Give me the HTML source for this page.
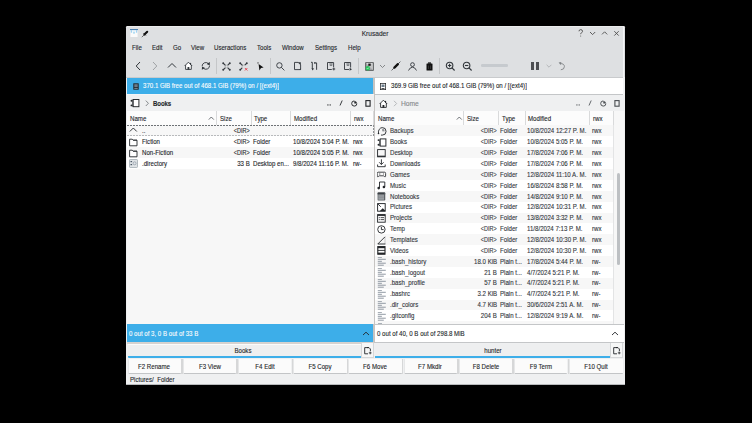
<!DOCTYPE html>
<html><head><meta charset="utf-8"><style>
html,body{margin:0;padding:0;}
body{width:752px;height:423px;background:#000;position:relative;overflow:hidden;font-family:"Liberation Sans", sans-serif;}
</style></head><body>
<div style="position:absolute;left:126px;top:26px;width:498.5px;height:358.6px;background:#eff0f1;border-radius:1.5px 1.5px 0 0;"></div>
<div style="position:absolute;left:126px;top:384px;width:498.5px;height:0.6px;background:#b9bbbd;"></div>
<div style="position:absolute;left:126px;top:26px;width:498.5px;height:51px;background:#dee0e2;border-radius:1.5px 1.5px 0 0;"></div>
<div style="position:absolute;left:127px;top:26px;width:496.5px;height:1px;background:#ebeced;"></div>
<div style="position:absolute;left:126px;top:76.5px;width:498px;height:1.5px;background:#c9cbcd;"></div>
<div style="position:absolute;left:275.1px;width:200px;text-align:center;transform-origin:50% 0;top:29.01px;height:10px;line-height:10px;font-size:6.6px;color:#2a2e32;font-weight:normal;white-space:nowrap;-webkit-text-stroke:0.12px #2a2e32;">Krusader</div>
<svg style="position:absolute;left:129.5px;top:28.8px;" width="8" height="8.5" viewBox="0 0 8 8.5"><rect x="0" y="0" width="8" height="8.5" fill="#fbfbfb" stroke="#c9cbcd" stroke-width="0.5"/><rect x="0" y="0" width="8" height="1.1" fill="#4a7fb0"/><rect x="0.8" y="1.1" width="1.3" height="2.6" fill="#9fd2f2"/><rect x="5.9" y="1.1" width="1.3" height="2.6" fill="#9fd2f2"/><rect x="3.4" y="1.1" width="1.2" height="2.2" fill="#cfe9f8"/><rect x="3.5" y="3.3" width="1" height="1.2" fill="#3daee9"/></svg>
<svg style="position:absolute;left:140.5px;top:29.5px;" width="8" height="8" viewBox="0 0 8 8"><path d="M3.4 4.6 L6.2 1.8" stroke="#111" stroke-width="2.1" stroke-linecap="round"/><path d="M2.6 3.2 L4.8 5.4" stroke="#111" stroke-width="0.9"/><path d="M3.2 4.8 L0.8 7.2" stroke="#333" stroke-width="0.7"/></svg>
<svg style="position:absolute;left:577px;top:29px;" width="48" height="9" viewBox="0 0 48 9">
<path d="M2 2.3 Q2 0.6 3.7 0.6 Q5.5 0.6 5.5 2.3 Q5.5 3.4 4.3 3.9 Q3.7 4.2 3.7 5.2" fill="none" stroke="#4d4d4d" stroke-width="0.9"/><circle cx="3.7" cy="7" r="0.5" fill="#4d4d4d"/>
<path d="M13 3 L15.6 5.6 L18.2 3" fill="none" stroke="#4d4d4d" stroke-width="0.9"/>
<path d="M25 5.4 L27.6 2.8 L30.2 5.4" fill="none" stroke="#4d4d4d" stroke-width="0.9"/>
<path d="M37.3 2.2 L41.7 6.6 M41.7 2.2 L37.3 6.6" fill="none" stroke="#4d4d4d" stroke-width="0.9"/>
</svg>
<div style="position:absolute;left:132px;transform-origin:0 0;transform:scaleX(0.85);top:42.51px;height:10px;line-height:10px;font-size:7.2px;color:#232629;font-weight:normal;white-space:nowrap;-webkit-text-stroke:0.12px #232629;">File</div>
<div style="position:absolute;left:152px;transform-origin:0 0;transform:scaleX(0.85);top:42.51px;height:10px;line-height:10px;font-size:7.2px;color:#232629;font-weight:normal;white-space:nowrap;-webkit-text-stroke:0.12px #232629;">Edit</div>
<div style="position:absolute;left:172.9px;transform-origin:0 0;transform:scaleX(0.85);top:42.51px;height:10px;line-height:10px;font-size:7.2px;color:#232629;font-weight:normal;white-space:nowrap;-webkit-text-stroke:0.12px #232629;">Go</div>
<div style="position:absolute;left:190.75px;transform-origin:0 0;transform:scaleX(0.85);top:42.51px;height:10px;line-height:10px;font-size:7.2px;color:#232629;font-weight:normal;white-space:nowrap;-webkit-text-stroke:0.12px #232629;">View</div>
<div style="position:absolute;left:214.4px;transform-origin:0 0;transform:scaleX(0.85);top:42.51px;height:10px;line-height:10px;font-size:7.2px;color:#232629;font-weight:normal;white-space:nowrap;-webkit-text-stroke:0.12px #232629;">Useractions</div>
<div style="position:absolute;left:257px;transform-origin:0 0;transform:scaleX(0.85);top:42.51px;height:10px;line-height:10px;font-size:7.2px;color:#232629;font-weight:normal;white-space:nowrap;-webkit-text-stroke:0.12px #232629;">Tools</div>
<div style="position:absolute;left:281.75px;transform-origin:0 0;transform:scaleX(0.85);top:42.51px;height:10px;line-height:10px;font-size:7.2px;color:#232629;font-weight:normal;white-space:nowrap;-webkit-text-stroke:0.12px #232629;">Window</div>
<div style="position:absolute;left:315px;transform-origin:0 0;transform:scaleX(0.85);top:42.51px;height:10px;line-height:10px;font-size:7.2px;color:#232629;font-weight:normal;white-space:nowrap;-webkit-text-stroke:0.12px #232629;">Settings</div>
<div style="position:absolute;left:348px;transform-origin:0 0;transform:scaleX(0.85);top:42.51px;height:10px;line-height:10px;font-size:7.2px;color:#232629;font-weight:normal;white-space:nowrap;-webkit-text-stroke:0.12px #232629;">Help</div>
<svg style="position:absolute;left:135px;top:61px;" width="6" height="10" viewBox="0 0 6 10"><path d="M5 1 L1.2 5 L5 9" fill="none" stroke="#31363b" stroke-width="1"/></svg>
<svg style="position:absolute;left:152px;top:61px;" width="6" height="10" viewBox="0 0 6 10"><path d="M1 1 L4.8 5 L1 9" fill="none" stroke="#9fa2a5" stroke-width="1"/></svg>
<svg style="position:absolute;left:167px;top:62px;" width="10" height="7" viewBox="0 0 10 7"><path d="M1 5.5 L5 1.5 L9 5.5" fill="none" stroke="#31363b" stroke-width="1"/></svg>
<svg style="position:absolute;left:184px;top:61.2px;" width="9" height="9" viewBox="0 0 9 9"><path d="M1.6 4.3 L4.4 1.6 L7.3 4.3 V8.4 H1.6 Z" fill="#fff"/><path d="M0.6 5 L4.4 1.2 L8.2 5" fill="none" stroke="#31363b" stroke-width="0.9"/><path d="M1.6 4.2 V8.4 H7.3 V4.2" fill="none" stroke="#31363b" stroke-width="0.9"/><rect x="3.5" y="5.9" width="1.9" height="2.8" rx="0.5" fill="#31363b"/><rect x="6" y="1.9" width="1.1" height="1.8" fill="#31363b"/></svg>
<svg style="position:absolute;left:201px;top:61px;" width="10" height="9" viewBox="0 0 10 9"><path d="M1.1 5.2 A3.7 3.7 0 0 1 7.4 2.6" fill="none" stroke="#31363b" stroke-width="0.9"/><path d="M5.6 2.9 L8.9 1.1 L8.7 4.4 Z" fill="#31363b"/><path d="M8.6 4.6 A3.7 3.7 0 0 1 2.3 7.2" fill="none" stroke="#31363b" stroke-width="0.9"/><path d="M4.1 6.9 L0.8 8.7 L1 5.4 Z" fill="#31363b"/></svg>
<div style="position:absolute;left:215.6px;top:57.75px;width:1px;height:16px;background:#c5c7c9;"></div>
<div style="position:absolute;left:269.8px;top:57.75px;width:1px;height:16px;background:#c5c7c9;"></div>
<div style="position:absolute;left:358px;top:57.75px;width:1px;height:16px;background:#c5c7c9;"></div>
<div style="position:absolute;left:438.9px;top:57.75px;width:1px;height:16px;background:#c5c7c9;"></div>
<svg style="position:absolute;left:221.5px;top:61.5px;" width="9" height="9" viewBox="0 0 9 9"><path d="M1.2 1.2 L3.2 3.2 M7.8 1.2 L5.8 3.2 M1.2 7.8 L3.2 5.8 M7.8 7.8 L5.8 5.8" stroke="#31363b" stroke-width="1.1"/><circle cx="1.2" cy="1.2" r="0.95" fill="#31363b"/><circle cx="7.8" cy="1.2" r="0.95" fill="#31363b"/><circle cx="1.2" cy="7.8" r="0.95" fill="#31363b"/><circle cx="7.8" cy="7.8" r="0.95" fill="#31363b"/><rect x="3.2" y="3.2" width="2.6" height="2.6" fill="none" stroke="#31363b" stroke-width="0.6" stroke-dasharray="0.8 0.6" opacity="0.8"/></svg>
<svg style="position:absolute;left:238.5px;top:61.5px;" width="9" height="9" viewBox="0 0 9 9"><path d="M1.2 1.2 L3.2 3.2 M7.8 1.2 L5.8 3.2 M1.2 7.8 L3.2 5.8" stroke="#31363b" stroke-width="1.1"/><circle cx="1.2" cy="1.2" r="0.95" fill="#31363b"/><circle cx="7.8" cy="1.2" r="0.95" fill="#31363b"/><circle cx="1.2" cy="7.8" r="0.95" fill="#31363b"/><path d="M3.2 3.2 H5.8 M3.2 3.2 V5.8" fill="none" stroke="#31363b" stroke-width="0.6" stroke-dasharray="0.8 0.6" opacity="0.8"/><path d="M5.9 6 L8.4 8.5 M8.4 6 L5.9 8.5" stroke="#e8303f" stroke-width="0.8"/></svg>
<svg style="position:absolute;left:256.5px;top:61.5px;" width="7" height="9" viewBox="0 0 7 9"><circle cx="1" cy="0.9" r="0.55" fill="#111"/><path d="M1.6 2 L6.6 5.6 L4 5.9 L2.4 8.4 Z" fill="#111"/></svg>
<svg style="position:absolute;left:276px;top:61.5px;" width="9" height="9" viewBox="0 0 9 9"><circle cx="3.4" cy="3.4" r="2.7" fill="none" stroke="#31363b" stroke-width="0.9"/><path d="M5.3 5.3 L8.4 8.4" stroke="#31363b" stroke-width="0.9"/></svg>
<svg style="position:absolute;left:293px;top:61px;" width="9" height="10" viewBox="0 0 9 10"><path d="M1.5 1.4 H5.2 L7.6 3.8 V8.6 H1.5 Z" fill="none" stroke="#31363b" stroke-width="0.9"/><path d="M5 1.2 L7.8 4 V1.2 Z" fill="#31363b"/><path d="M6.2 8.8 L7.8 7.2 V8.8 Z" fill="#31363b"/></svg>
<svg style="position:absolute;left:310px;top:61px;" width="8" height="10" viewBox="0 0 8 10"><path d="M1 1.3 H2.3 V8" fill="none" stroke="#31363b" stroke-width="0.95"/><path d="M1.6 7.2 L4.2 7.6 L2.4 9.4 Z" fill="#31363b"/><path d="M4.2 1.9 H6.6 V8.8" fill="none" stroke="#31363b" stroke-width="0.95"/><rect x="4.2" y="1.3" width="1.2" height="1.3" fill="#31363b"/></svg>
<svg style="position:absolute;left:326px;top:61px;" width="10" height="10" viewBox="0 0 10 10"><path d="M7.6 6.2 V1.5 H1.5 V8.5 H5.8" fill="none" stroke="#31363b" stroke-width="0.9"/><path d="M4.1 1.5 V4.6 L5 3.9 L5.9 4.6 V1.5" fill="none" stroke="#31363b" stroke-width="0.6"/><path d="M6.4 8 H9.2 M7.8 6.6 V9.4" stroke="#31363b" stroke-width="0.9"/></svg>
<svg style="position:absolute;left:343px;top:61px;" width="10" height="10" viewBox="0 0 10 10"><path d="M7.6 6.6 V1.5 H1.5 V8.5 H6" fill="none" stroke="#31363b" stroke-width="0.9"/><path d="M4.1 1.5 V4.6 L5 3.9 L5.9 4.6 V1.5" fill="none" stroke="#31363b" stroke-width="0.6"/><path d="M6.6 6.8 L9 8.3 L6.6 9.8 Z" fill="#31363b"/></svg>
<svg style="position:absolute;left:364.5px;top:61.5px;" width="9" height="9" viewBox="0 0 9 9"><rect x="0.3" y="0.3" width="8.4" height="8.4" fill="#3a3c3e"/><rect x="1.1" y="1.1" width="6.8" height="6.8" fill="#a9abad"/><path d="M1.1 1.1 L4.5 4.5 L7.9 1.1 Z" fill="#d8d9da"/><path d="M7.9 7.9 L4.5 4.5 L7.9 1.1 Z" fill="#c4c5c6"/><rect x="3.3" y="1.6" width="2.4" height="2.2" fill="#111"/><circle cx="2.8" cy="6.2" r="2.2" fill="#27c75c"/><path d="M1.8 6.2 L2.6 7 L3.9 5.5" fill="none" stroke="#fff" stroke-width="0.5"/></svg>
<svg style="position:absolute;left:379px;top:64px;" width="7" height="5" viewBox="0 0 7 5"><path d="M1 1 L3.5 3.5 L6 1" fill="none" stroke="#6e7174" stroke-width="0.8"/></svg>
<svg style="position:absolute;left:391px;top:61px;" width="10" height="10" viewBox="0 0 10 10"><path d="M3.4 6.6 L6.9 3.1" stroke="#111" stroke-width="2.3" stroke-linecap="round"/><path d="M0.6 9.4 L3 7 M7.3 2.7 L9.4 0.6" stroke="#31363b" stroke-width="0.75"/></svg>
<svg style="position:absolute;left:408px;top:61.5px;" width="9" height="9" viewBox="0 0 9 9"><circle cx="4.5" cy="2.6" r="1.9" fill="none" stroke="#31363b" stroke-width="0.9"/><path d="M0.5 8.5 Q2 5.2 4.5 5.2 Q7 5.2 8.5 8.5" fill="none" stroke="#31363b" stroke-width="0.9"/></svg>
<svg style="position:absolute;left:425.5px;top:61.5px;" width="7" height="9" viewBox="0 0 7 9"><rect x="0.5" y="1.5" width="6" height="7" rx="0.5" fill="#111"/><rect x="2" y="0.4" width="3" height="1.3" fill="#111"/><path d="M2.5 3.5 V7 M4.5 3.5 V7" stroke="#555" stroke-width="0.5"/></svg>
<svg style="position:absolute;left:445px;top:61px;" width="11" height="10" viewBox="0 0 11 10"><circle cx="4.6" cy="4.5" r="3.3" fill="none" stroke="#31363b" stroke-width="1.05"/><path d="M7 6.9 L9.6 9.5" stroke="#31363b" stroke-width="1.2"/><path d="M2.9 4.5 H6.3 M4.6 2.8 V6.2" stroke="#31363b" stroke-width="1.1"/></svg>
<svg style="position:absolute;left:462px;top:61px;" width="11" height="10" viewBox="0 0 11 10"><circle cx="4.6" cy="4.5" r="3.3" fill="none" stroke="#31363b" stroke-width="1.05"/><path d="M7 6.9 L9.6 9.5" stroke="#31363b" stroke-width="1.2"/><path d="M2.9 4.5 H6.3" stroke="#31363b" stroke-width="1.1"/></svg>
<div style="position:absolute;left:481px;top:64.2px;width:27px;height:2.6px;background:#c6cace;border-radius:1.3px;"></div>
<div style="position:absolute;left:530.5px;top:62px;width:3.2px;height:8px;background:#4d4f52;"></div>
<div style="position:absolute;left:535.7px;top:62px;width:3.2px;height:8px;background:#4d4f52;"></div>
<svg style="position:absolute;left:545.5px;top:64.2px;" width="6" height="4" viewBox="0 0 6 4"><path d="M0.6 0.8 L3 3.2 L5.4 0.8" fill="none" stroke="#a9abad" stroke-width="0.8"/></svg>
<svg style="position:absolute;left:558px;top:61px;" width="8" height="10" viewBox="0 0 8 10"><path d="M2 2.6 Q6.4 2.4 6.4 5.6 Q6.4 8.6 2.8 8.8" fill="none" stroke="#7f8285" stroke-width="0.9"/><path d="M0.6 1.6 L3.4 0.9 L2.6 4 Z" fill="#7f8285"/></svg>
<div style="position:absolute;left:127px;top:77.7px;width:246px;height:16.2px;background:#3daee9;"></div>
<svg style="position:absolute;left:132.5px;top:82.5px;" width="6" height="7" viewBox="0 0 6 7"><rect x="0.3" y="0.3" width="5.4" height="6.4" fill="#232629"/><rect x="1.3" y="1.2" width="3.4" height="3" fill="#6b7c8a"/><rect x="1.3" y="5" width="3.4" height="0.8" fill="#8899a6"/></svg>
<div style="position:absolute;left:142.9px;transform-origin:0 0;transform:scaleX(0.85);top:81.31px;height:10px;line-height:10px;font-size:7.2px;color:#fcfcfc;font-weight:normal;white-space:nowrap;-webkit-text-stroke:0.12px #fcfcfc;">370.1 GiB free out of 468.1 GiB (79%) on / [(ext4)]</div>
<div style="position:absolute;left:373px;top:78px;width:2.4px;height:264.5px;background:#c6c4c2;"></div>
<div style="position:absolute;left:375.4px;top:78px;width:248.6px;height:16.6px;background:#fff;box-sizing:border-box;border-bottom:1px solid #c4c6c8;"></div>
<div style="position:absolute;left:623.4px;top:26.5px;width:1px;height:68px;background:#f4f5f6;"></div>
<svg style="position:absolute;left:379.5px;top:82.5px;" width="6" height="7" viewBox="0 0 6 7"><rect x="0.3" y="0.3" width="5.4" height="6.4" fill="#fff" stroke="#232629" stroke-width="0.9"/><rect x="1.5" y="1.5" width="3" height="2.5" fill="#6b7c8a"/><rect x="1.5" y="5" width="3" height="0.8" fill="#232629"/></svg>
<div style="position:absolute;left:390.5px;transform-origin:0 0;transform:scaleX(0.85);top:81.31px;height:10px;line-height:10px;font-size:7.2px;color:#232629;font-weight:normal;white-space:nowrap;-webkit-text-stroke:0.12px #232629;">369.9 GiB free out of 468.1 GiB (79%) on / [(ext4)]</div>
<div style="position:absolute;left:127px;top:94px;width:246.5px;height:1px;background:#f4f5f6;"></div>
<div style="position:absolute;left:127px;top:95px;width:246.5px;height:15.7px;background:#eff0f1;"></div>
<div style="position:absolute;left:375px;top:94.5px;width:249px;height:16.2px;background:#eff0f1;"></div>
<svg style="position:absolute;left:129.5px;top:98px;" width="10" height="10" viewBox="0 0 10 10"><rect x="3.2" y="1.5" width="5.7" height="7.2" fill="#fff" stroke="#232629" stroke-width="0.95"/><path d="M2.5 1.5 V8.7" stroke="#232629" stroke-width="0.6"/><circle cx="1.5" cy="2.7" r="0.95" fill="#232629"/><circle cx="1.5" cy="7.4" r="0.95" fill="#232629"/></svg>
<svg style="position:absolute;left:144.5px;top:99.8px;" width="5" height="7" viewBox="0 0 5 7"><path d="M0.8 0.6 L3.4 3.3 L0.8 6" fill="none" stroke="#6a6e72" stroke-width="0.8"/></svg>
<div style="position:absolute;left:152.9px;transform-origin:0 0;transform:scaleX(0.85);top:98.51px;height:10px;line-height:10px;font-size:7.2px;color:#232629;font-weight:bold;white-space:nowrap;-webkit-text-stroke:0.12px #232629;letter-spacing:-0.15px;">Books</div>
<svg style="position:absolute;left:326.5px;top:103.5px;" width="5" height="2" viewBox="0 0 5 2"><rect x="0.3" y="0.4" width="1.2" height="1.1" fill="#232629"/><rect x="2.6" y="0.4" width="1.2" height="1.1" fill="#232629"/></svg>
<svg style="position:absolute;left:338.5px;top:100px;" width="4" height="6" viewBox="0 0 4 6"><path d="M3.2 0.5 L1 5.5" stroke="#232629" stroke-width="0.9"/></svg>
<svg style="position:absolute;left:350.5px;top:100px;" width="7" height="7" viewBox="0 0 7 7"><path d="M3.3 0.9 A2.6 2.6 0 1 0 5.9 3.6" fill="none" stroke="#232629" stroke-width="0.95"/><path d="M3.3 1 L3.3 3.6 L5.9 3.6 A2.6 2.6 0 0 0 3.3 1 Z" fill="#232629"/></svg>
<svg style="position:absolute;left:364.5px;top:100px;" width="6" height="7" viewBox="0 0 6 7"><rect x="0.9" y="0.6" width="4.2" height="5.6" fill="none" stroke="#232629" stroke-width="1.1"/></svg>
<svg style="position:absolute;left:576.3px;top:103.5px;" width="5" height="2" viewBox="0 0 5 2"><rect x="0.3" y="0.4" width="1.2" height="1.1" fill="#55595d"/><rect x="2.6" y="0.4" width="1.2" height="1.1" fill="#55595d"/></svg>
<svg style="position:absolute;left:588.3px;top:100px;" width="4" height="6" viewBox="0 0 4 6"><path d="M3.2 0.5 L1 5.5" stroke="#55595d" stroke-width="0.9"/></svg>
<svg style="position:absolute;left:600.3px;top:100px;" width="7" height="7" viewBox="0 0 7 7"><path d="M3.3 0.9 A2.6 2.6 0 1 0 5.9 3.6" fill="none" stroke="#4a4e52" stroke-width="0.95"/><path d="M3.3 1 L3.3 3.6 L5.9 3.6 A2.6 2.6 0 0 0 3.3 1 Z" fill="#4a4e52"/></svg>
<svg style="position:absolute;left:614.3px;top:100px;" width="6" height="7" viewBox="0 0 6 7"><rect x="0.9" y="0.6" width="4.2" height="5.6" fill="none" stroke="#4a4e52" stroke-width="1.1"/></svg>
<svg style="position:absolute;left:378.5px;top:98.5px;" width="9" height="9" viewBox="0 0 9 9"><path d="M1.6 4.3 L4.4 1.6 L7.3 4.3 V8.4 H1.6 Z" fill="#fff"/><path d="M0.6 5 L4.4 1.2 L8.2 5" fill="none" stroke="#232629" stroke-width="0.9"/><path d="M1.6 4.2 V8.4 H7.3 V4.2" fill="none" stroke="#232629" stroke-width="0.9"/><rect x="3.5" y="5.9" width="1.9" height="2.8" rx="0.5" fill="#232629"/><rect x="6" y="1.9" width="1.1" height="1.8" fill="#232629"/></svg>
<svg style="position:absolute;left:392.5px;top:100px;" width="5" height="7" viewBox="0 0 5 7"><path d="M1 0.8 L3.6 3.5 L1 6.2" fill="none" stroke="#a7aaad" stroke-width="0.8"/></svg>
<div style="position:absolute;left:400.9px;transform-origin:0 0;transform:scaleX(0.93);top:98.51px;height:10px;line-height:10px;font-size:7.2px;color:#85888b;font-weight:normal;white-space:nowrap;-webkit-text-stroke:0.12px #85888b;">Home</div>
<div style="position:absolute;left:127px;top:110.7px;width:246.5px;height:14.3px;background:#fcfcfc;"></div>
<div style="position:absolute;left:216.2px;top:110.7px;width:1px;height:14.3px;background:#d9dadb;"></div>
<div style="position:absolute;left:251px;top:110.7px;width:1px;height:14.3px;background:#d9dadb;"></div>
<div style="position:absolute;left:290.4px;top:110.7px;width:1px;height:14.3px;background:#d9dadb;"></div>
<div style="position:absolute;left:350px;top:110.7px;width:1px;height:14.3px;background:#d9dadb;"></div>
<div style="position:absolute;left:129.75px;transform-origin:0 0;transform:scaleX(0.85);top:113.51px;height:10px;line-height:10px;font-size:7.2px;color:#232629;font-weight:normal;white-space:nowrap;-webkit-text-stroke:0.12px #232629;">Name</div>
<div style="position:absolute;left:219.5px;transform-origin:0 0;transform:scaleX(0.85);top:113.51px;height:10px;line-height:10px;font-size:7.2px;color:#232629;font-weight:normal;white-space:nowrap;-webkit-text-stroke:0.12px #232629;">Size</div>
<div style="position:absolute;left:254.25px;transform-origin:0 0;transform:scaleX(0.85);top:113.51px;height:10px;line-height:10px;font-size:7.2px;color:#232629;font-weight:normal;white-space:nowrap;-webkit-text-stroke:0.12px #232629;">Type</div>
<div style="position:absolute;left:293.75px;transform-origin:0 0;transform:scaleX(0.85);top:113.51px;height:10px;line-height:10px;font-size:7.2px;color:#232629;font-weight:normal;white-space:nowrap;-webkit-text-stroke:0.12px #232629;">Modified</div>
<div style="position:absolute;left:353.7px;transform-origin:0 0;transform:scaleX(0.85);top:113.51px;height:10px;line-height:10px;font-size:7.2px;color:#232629;font-weight:normal;white-space:nowrap;-webkit-text-stroke:0.12px #232629;">rwx</div>
<svg style="position:absolute;left:208.2px;top:115.5px;" width="7" height="5" viewBox="0 0 7 5"><path d="M0.8 3.6 L3.3 1 L5.8 3.6" fill="none" stroke="#4d5257" stroke-width="0.8"/></svg>
<div style="position:absolute;left:372.5px;top:110.7px;width:1px;height:14.3px;background:#d9dadb;"></div>
<div style="position:absolute;left:375px;top:110.7px;width:238.5px;height:14.3px;background:#fcfcfc;"></div>
<div style="position:absolute;left:463.2px;top:110.7px;width:1px;height:14.3px;background:#d9dadb;"></div>
<div style="position:absolute;left:498.2px;top:110.7px;width:1px;height:14.3px;background:#d9dadb;"></div>
<div style="position:absolute;left:524.9px;top:110.7px;width:1px;height:14.3px;background:#d9dadb;"></div>
<div style="position:absolute;left:589.2px;top:110.7px;width:1px;height:14.3px;background:#d9dadb;"></div>
<div style="position:absolute;left:378px;transform-origin:0 0;transform:scaleX(0.85);top:113.51px;height:10px;line-height:10px;font-size:7.2px;color:#232629;font-weight:normal;white-space:nowrap;-webkit-text-stroke:0.12px #232629;">Name</div>
<div style="position:absolute;left:466.75px;transform-origin:0 0;transform:scaleX(0.85);top:113.51px;height:10px;line-height:10px;font-size:7.2px;color:#232629;font-weight:normal;white-space:nowrap;-webkit-text-stroke:0.12px #232629;">Size</div>
<div style="position:absolute;left:501.5px;transform-origin:0 0;transform:scaleX(0.85);top:113.51px;height:10px;line-height:10px;font-size:7.2px;color:#232629;font-weight:normal;white-space:nowrap;-webkit-text-stroke:0.12px #232629;">Type</div>
<div style="position:absolute;left:528px;transform-origin:0 0;transform:scaleX(0.85);top:113.51px;height:10px;line-height:10px;font-size:7.2px;color:#232629;font-weight:normal;white-space:nowrap;-webkit-text-stroke:0.12px #232629;">Modified</div>
<div style="position:absolute;left:592.5px;transform-origin:0 0;transform:scaleX(0.85);top:113.51px;height:10px;line-height:10px;font-size:7.2px;color:#232629;font-weight:normal;white-space:nowrap;-webkit-text-stroke:0.12px #232629;">rwx</div>
<svg style="position:absolute;left:455.5px;top:115.5px;" width="7" height="5" viewBox="0 0 7 5"><path d="M0.8 3.6 L3.3 1 L5.8 3.6" fill="none" stroke="#4d5257" stroke-width="0.8"/></svg>
<div style="position:absolute;left:613px;top:110.7px;width:1px;height:14.3px;background:#d9dadb;"></div>
<div style="position:absolute;left:127px;top:125px;width:246.5px;height:199.3px;background:#f7f7f7;"></div>
<div style="position:absolute;left:375px;top:125px;width:238.5px;height:198.8px;background:#f7f7f7;overflow:hidden;"></div>
<div style="position:absolute;left:613.5px;top:110.7px;width:10.5px;height:213.3px;background:#f7f7f7;"></div>
<div style="position:absolute;left:613px;top:125px;width:1px;height:198.8px;background:#e3e4e5;"></div>
<div style="position:absolute;left:616.8px;top:173px;width:3px;height:92px;background:#bdc0c3;border-radius:1.5px;"></div>
<div style="position:absolute;left:127px;top:125.6px;width:246.5px;height:10.87px;background:#f7f7f7;"></div>
<div style="position:absolute;left:127px;top:125px;width:246.5px;height:1px;background:repeating-linear-gradient(90deg,#6e7276 0 2px,transparent 2px 3px);"></div>
<div style="position:absolute;left:127px;top:135px;width:246.5px;height:1px;background:repeating-linear-gradient(90deg,#b8babc 0 2px,transparent 2px 3px);"></div>
<div style="position:absolute;left:372.7px;top:125px;width:1px;height:11px;background:repeating-linear-gradient(180deg,#8e9194 0 2px,transparent 2px 3px);"></div>
<svg style="position:absolute;left:129px;top:126.8px;" width="10" height="10" viewBox="0 0 10 10"><path d="M0.8 4.5 L4.3 1 L7.8 4.5" fill="none" stroke="#232629" stroke-width="0.9"/></svg>
<div style="position:absolute;left:142px;transform-origin:0 0;transform:scaleX(0.85);top:126.31px;height:10px;line-height:10px;font-size:7.2px;color:#232629;font-weight:normal;white-space:nowrap;-webkit-text-stroke:0.12px #232629;">..</div>
<div style="position:absolute;right:502.1px;transform-origin:100% 0;transform:scaleX(0.77);top:126.31px;height:10px;line-height:10px;font-size:7.2px;color:#232629;font-weight:normal;white-space:nowrap;-webkit-text-stroke:0.12px #232629;">&lt;DIR&gt;</div>
<div style="position:absolute;left:253.3px;transform-origin:0 0;transform:scaleX(0.85);top:126.31px;height:10px;line-height:10px;font-size:7.2px;color:#232629;font-weight:normal;white-space:nowrap;-webkit-text-stroke:0.12px #232629;"></div>
<div style="position:absolute;left:292.8px;transform-origin:0 0;transform:scaleX(0.85);top:126.31px;height:10px;line-height:10px;font-size:7.2px;color:#232629;font-weight:normal;white-space:nowrap;-webkit-text-stroke:0.12px #232629;"></div>
<div style="position:absolute;left:352.9px;transform-origin:0 0;transform:scaleX(0.85);top:126.31px;height:10px;line-height:10px;font-size:7.2px;color:#232629;font-weight:normal;white-space:nowrap;-webkit-text-stroke:0.12px #232629;"></div>
<div style="position:absolute;left:127px;top:136.47px;width:246.5px;height:10.87px;background:#ffffff;"></div>
<svg style="position:absolute;left:129px;top:137.67px;" width="10" height="10" viewBox="0 0 10 10"><path d="M0.6 1.2 H3.2 L4.2 2.2 H8 V7.8 H0.6 Z" fill="#fff" stroke="#232629" stroke-width="0.9"/><path d="M3.6 1.8 H8 V2.6 H4.2" fill="#232629"/></svg>
<div style="position:absolute;left:142px;transform-origin:0 0;transform:scaleX(0.85);top:137.18px;height:10px;line-height:10px;font-size:7.2px;color:#232629;font-weight:normal;white-space:nowrap;-webkit-text-stroke:0.12px #232629;">Fiction</div>
<div style="position:absolute;right:502.1px;transform-origin:100% 0;transform:scaleX(0.77);top:137.18px;height:10px;line-height:10px;font-size:7.2px;color:#232629;font-weight:normal;white-space:nowrap;-webkit-text-stroke:0.12px #232629;">&lt;DIR&gt;</div>
<div style="position:absolute;left:253.3px;transform-origin:0 0;transform:scaleX(0.85);top:137.18px;height:10px;line-height:10px;font-size:7.2px;color:#232629;font-weight:normal;white-space:nowrap;-webkit-text-stroke:0.12px #232629;">Folder</div>
<div style="position:absolute;left:292.8px;transform-origin:0 0;transform:scaleX(0.85);top:137.18px;height:10px;line-height:10px;font-size:7.2px;color:#232629;font-weight:normal;white-space:nowrap;-webkit-text-stroke:0.12px #232629;">10/8/2024 5:04 P. M.</div>
<div style="position:absolute;left:352.9px;transform-origin:0 0;transform:scaleX(0.85);top:137.18px;height:10px;line-height:10px;font-size:7.2px;color:#232629;font-weight:normal;white-space:nowrap;-webkit-text-stroke:0.12px #232629;">rwx</div>
<div style="position:absolute;left:127px;top:147.34px;width:246.5px;height:10.87px;background:#f7f7f7;"></div>
<svg style="position:absolute;left:129px;top:148.54px;" width="10" height="10" viewBox="0 0 10 10"><path d="M0.6 1.2 H3.2 L4.2 2.2 H8 V7.8 H0.6 Z" fill="#fff" stroke="#232629" stroke-width="0.9"/><path d="M3.6 1.8 H8 V2.6 H4.2" fill="#232629"/></svg>
<div style="position:absolute;left:142px;transform-origin:0 0;transform:scaleX(0.85);top:148.05px;height:10px;line-height:10px;font-size:7.2px;color:#232629;font-weight:normal;white-space:nowrap;-webkit-text-stroke:0.12px #232629;">Non-Fiction</div>
<div style="position:absolute;right:502.1px;transform-origin:100% 0;transform:scaleX(0.77);top:148.05px;height:10px;line-height:10px;font-size:7.2px;color:#232629;font-weight:normal;white-space:nowrap;-webkit-text-stroke:0.12px #232629;">&lt;DIR&gt;</div>
<div style="position:absolute;left:253.3px;transform-origin:0 0;transform:scaleX(0.85);top:148.05px;height:10px;line-height:10px;font-size:7.2px;color:#232629;font-weight:normal;white-space:nowrap;-webkit-text-stroke:0.12px #232629;">Folder</div>
<div style="position:absolute;left:292.8px;transform-origin:0 0;transform:scaleX(0.85);top:148.05px;height:10px;line-height:10px;font-size:7.2px;color:#232629;font-weight:normal;white-space:nowrap;-webkit-text-stroke:0.12px #232629;">10/8/2024 5:05 P. M.</div>
<div style="position:absolute;left:352.9px;transform-origin:0 0;transform:scaleX(0.85);top:148.05px;height:10px;line-height:10px;font-size:7.2px;color:#232629;font-weight:normal;white-space:nowrap;-webkit-text-stroke:0.12px #232629;">rwx</div>
<div style="position:absolute;left:127px;top:158.20999999999998px;width:246.5px;height:10.87px;background:#ffffff;"></div>
<svg style="position:absolute;left:129px;top:159.40999999999997px;" width="10" height="10" viewBox="0 0 10 10"><rect x="0.5" y="0.5" width="8" height="8" rx="0.7" fill="#dfe3e6" stroke="#9aa3ab" stroke-width="0.7"/><rect x="1.5" y="2" width="1.6" height="1.2" fill="#4d5b68"/><rect x="1.5" y="5" width="1.6" height="1.2" fill="#4d5b68"/><circle cx="5.6" cy="4.3" r="1.5" fill="none" stroke="#7f8c99" stroke-width="0.6"/></svg>
<div style="position:absolute;left:142px;transform-origin:0 0;transform:scaleX(0.85);top:158.92px;height:10px;line-height:10px;font-size:7.2px;color:#232629;font-weight:normal;white-space:nowrap;-webkit-text-stroke:0.12px #232629;">.directory</div>
<div style="position:absolute;right:502.1px;transform-origin:100% 0;transform:scaleX(0.85);top:158.92px;height:10px;line-height:10px;font-size:7.2px;color:#232629;font-weight:normal;white-space:nowrap;-webkit-text-stroke:0.12px #232629;">33 B</div>
<div style="position:absolute;left:253.3px;transform-origin:0 0;transform:scaleX(0.85);top:158.92px;height:10px;line-height:10px;font-size:7.2px;color:#232629;font-weight:normal;white-space:nowrap;-webkit-text-stroke:0.12px #232629;">Desktop en...</div>
<div style="position:absolute;left:292.8px;transform-origin:0 0;transform:scaleX(0.85);top:158.92px;height:10px;line-height:10px;font-size:7.2px;color:#232629;font-weight:normal;white-space:nowrap;-webkit-text-stroke:0.12px #232629;">9/8/2024 11:16 P. M.</div>
<div style="position:absolute;left:352.9px;transform-origin:0 0;transform:scaleX(0.85);top:158.92px;height:10px;line-height:10px;font-size:7.2px;color:#232629;font-weight:normal;white-space:nowrap;-webkit-text-stroke:0.12px #232629;">rw-</div>
<div style="position:absolute;left:375px;top:125.6px;width:238px;height:10.87px;background:#f7f7f7;"></div>
<svg style="position:absolute;left:377px;top:126.8px;" width="10" height="10" viewBox="0 0 10 10"><path d="M1.5 6.4 C0.9 3.2 2.9 0.6 5.3 0.6 A3.75 3.75 0 0 1 5.3 8.1 L4 8.1" fill="none" stroke="#232629" stroke-width="0.9"/><circle cx="1.5" cy="6.5" r="0.8" fill="#232629"/><path d="M5.2 4.3 V1.8 A2.5 2.5 0 0 1 7.5 4.6 Z" fill="#8d9093"/></svg>
<div style="position:absolute;left:390px;transform-origin:0 0;transform:scaleX(0.85);top:126.31px;height:10px;line-height:10px;font-size:7.2px;color:#31363b;font-weight:normal;white-space:nowrap;-webkit-text-stroke:0.12px #31363b;">Backups</div>
<div style="position:absolute;right:255.10000000000002px;transform-origin:100% 0;transform:scaleX(0.77);top:126.31px;height:10px;line-height:10px;font-size:7.2px;color:#31363b;font-weight:normal;white-space:nowrap;-webkit-text-stroke:0.12px #31363b;">&lt;DIR&gt;</div>
<div style="position:absolute;left:499.8px;transform-origin:0 0;transform:scaleX(0.85);top:126.31px;height:10px;line-height:10px;font-size:7.2px;color:#31363b;font-weight:normal;white-space:nowrap;-webkit-text-stroke:0.12px #31363b;">Folder</div>
<div style="position:absolute;left:526.5px;transform-origin:0 0;transform:scaleX(0.85);top:126.31px;height:10px;line-height:10px;font-size:7.2px;color:#31363b;font-weight:normal;white-space:nowrap;-webkit-text-stroke:0.12px #31363b;">10/8/2024 12:27 P. M.</div>
<div style="position:absolute;left:591.8px;transform-origin:0 0;transform:scaleX(0.85);top:126.31px;height:10px;line-height:10px;font-size:7.2px;color:#31363b;font-weight:normal;white-space:nowrap;-webkit-text-stroke:0.12px #31363b;">rwx</div>
<div style="position:absolute;left:375px;top:136.47px;width:238px;height:10.87px;background:#ffffff;"></div>
<svg style="position:absolute;left:377px;top:137.67px;" width="10" height="10" viewBox="0 0 10 10"><rect x="3.2" y="0.9" width="5.7" height="7.2" fill="#fff" stroke="#232629" stroke-width="0.95"/><path d="M2.5 1.5 V8.1" stroke="#232629" stroke-width="0.6"/><circle cx="1.5" cy="2.1" r="0.95" fill="#232629"/><circle cx="1.5" cy="6.8" r="0.95" fill="#232629"/></svg>
<div style="position:absolute;left:390px;transform-origin:0 0;transform:scaleX(0.85);top:137.18px;height:10px;line-height:10px;font-size:7.2px;color:#31363b;font-weight:normal;white-space:nowrap;-webkit-text-stroke:0.12px #31363b;">Books</div>
<div style="position:absolute;right:255.10000000000002px;transform-origin:100% 0;transform:scaleX(0.77);top:137.18px;height:10px;line-height:10px;font-size:7.2px;color:#31363b;font-weight:normal;white-space:nowrap;-webkit-text-stroke:0.12px #31363b;">&lt;DIR&gt;</div>
<div style="position:absolute;left:499.8px;transform-origin:0 0;transform:scaleX(0.85);top:137.18px;height:10px;line-height:10px;font-size:7.2px;color:#31363b;font-weight:normal;white-space:nowrap;-webkit-text-stroke:0.12px #31363b;">Folder</div>
<div style="position:absolute;left:526.5px;transform-origin:0 0;transform:scaleX(0.85);top:137.18px;height:10px;line-height:10px;font-size:7.2px;color:#31363b;font-weight:normal;white-space:nowrap;-webkit-text-stroke:0.12px #31363b;">10/8/2024 5:05 P. M.</div>
<div style="position:absolute;left:591.8px;transform-origin:0 0;transform:scaleX(0.85);top:137.18px;height:10px;line-height:10px;font-size:7.2px;color:#31363b;font-weight:normal;white-space:nowrap;-webkit-text-stroke:0.12px #31363b;">rwx</div>
<div style="position:absolute;left:375px;top:147.34px;width:238px;height:10.87px;background:#f7f7f7;"></div>
<svg style="position:absolute;left:377px;top:148.54px;" width="10" height="10" viewBox="0 0 10 10"><rect x="0.6" y="0.6" width="7.6" height="7.2" fill="none" stroke="#232629" stroke-width="0.9"/><rect x="0.6" y="6.6" width="7.6" height="1.4" fill="#232629" opacity="0.8"/></svg>
<div style="position:absolute;left:390px;transform-origin:0 0;transform:scaleX(0.85);top:148.05px;height:10px;line-height:10px;font-size:7.2px;color:#31363b;font-weight:normal;white-space:nowrap;-webkit-text-stroke:0.12px #31363b;">Desktop</div>
<div style="position:absolute;right:255.10000000000002px;transform-origin:100% 0;transform:scaleX(0.77);top:148.05px;height:10px;line-height:10px;font-size:7.2px;color:#31363b;font-weight:normal;white-space:nowrap;-webkit-text-stroke:0.12px #31363b;">&lt;DIR&gt;</div>
<div style="position:absolute;left:499.8px;transform-origin:0 0;transform:scaleX(0.85);top:148.05px;height:10px;line-height:10px;font-size:7.2px;color:#31363b;font-weight:normal;white-space:nowrap;-webkit-text-stroke:0.12px #31363b;">Folder</div>
<div style="position:absolute;left:526.5px;transform-origin:0 0;transform:scaleX(0.85);top:148.05px;height:10px;line-height:10px;font-size:7.2px;color:#31363b;font-weight:normal;white-space:nowrap;-webkit-text-stroke:0.12px #31363b;">17/8/2024 7:06 P. M.</div>
<div style="position:absolute;left:591.8px;transform-origin:0 0;transform:scaleX(0.85);top:148.05px;height:10px;line-height:10px;font-size:7.2px;color:#31363b;font-weight:normal;white-space:nowrap;-webkit-text-stroke:0.12px #31363b;">rwx</div>
<div style="position:absolute;left:375px;top:158.20999999999998px;width:238px;height:10.87px;background:#ffffff;"></div>
<svg style="position:absolute;left:377px;top:159.40999999999997px;" width="10" height="10" viewBox="0 0 10 10"><path d="M4.4 0.3 V5.5 M2.2 3.3 L4.4 5.5 L6.6 3.3" fill="none" stroke="#232629" stroke-width="0.9"/><path d="M0.6 5.5 V7.7 H8.2 V5.5" fill="none" stroke="#232629" stroke-width="0.9"/></svg>
<div style="position:absolute;left:390px;transform-origin:0 0;transform:scaleX(0.85);top:158.92px;height:10px;line-height:10px;font-size:7.2px;color:#31363b;font-weight:normal;white-space:nowrap;-webkit-text-stroke:0.12px #31363b;">Downloads</div>
<div style="position:absolute;right:255.10000000000002px;transform-origin:100% 0;transform:scaleX(0.77);top:158.92px;height:10px;line-height:10px;font-size:7.2px;color:#31363b;font-weight:normal;white-space:nowrap;-webkit-text-stroke:0.12px #31363b;">&lt;DIR&gt;</div>
<div style="position:absolute;left:499.8px;transform-origin:0 0;transform:scaleX(0.85);top:158.92px;height:10px;line-height:10px;font-size:7.2px;color:#31363b;font-weight:normal;white-space:nowrap;-webkit-text-stroke:0.12px #31363b;">Folder</div>
<div style="position:absolute;left:526.5px;transform-origin:0 0;transform:scaleX(0.85);top:158.92px;height:10px;line-height:10px;font-size:7.2px;color:#31363b;font-weight:normal;white-space:nowrap;-webkit-text-stroke:0.12px #31363b;">17/8/2024 7:06 P. M.</div>
<div style="position:absolute;left:591.8px;transform-origin:0 0;transform:scaleX(0.85);top:158.92px;height:10px;line-height:10px;font-size:7.2px;color:#31363b;font-weight:normal;white-space:nowrap;-webkit-text-stroke:0.12px #31363b;">rwx</div>
<div style="position:absolute;left:375px;top:169.07999999999998px;width:238px;height:10.87px;background:#f7f7f7;"></div>
<svg style="position:absolute;left:377px;top:170.27999999999997px;" width="10" height="10" viewBox="0 0 10 10"><path d="M1.2 2.2 H7.6 Q8.6 2.2 8.6 3.4 V6.2 Q8.6 7 7.6 6.6 L6.4 5.8 H2.4 L1.2 6.6 Q0.2 7 0.2 6.2 V3.4 Q0.2 2.2 1.2 2.2 Z" fill="none" stroke="#232629" stroke-width="0.85"/><path d="M2 4 H3.4 M6 4 H7" stroke="#232629" stroke-width="0.7"/></svg>
<div style="position:absolute;left:390px;transform-origin:0 0;transform:scaleX(0.85);top:169.79px;height:10px;line-height:10px;font-size:7.2px;color:#31363b;font-weight:normal;white-space:nowrap;-webkit-text-stroke:0.12px #31363b;">Games</div>
<div style="position:absolute;right:255.10000000000002px;transform-origin:100% 0;transform:scaleX(0.77);top:169.79px;height:10px;line-height:10px;font-size:7.2px;color:#31363b;font-weight:normal;white-space:nowrap;-webkit-text-stroke:0.12px #31363b;">&lt;DIR&gt;</div>
<div style="position:absolute;left:499.8px;transform-origin:0 0;transform:scaleX(0.85);top:169.79px;height:10px;line-height:10px;font-size:7.2px;color:#31363b;font-weight:normal;white-space:nowrap;-webkit-text-stroke:0.12px #31363b;">Folder</div>
<div style="position:absolute;left:526.5px;transform-origin:0 0;transform:scaleX(0.85);top:169.79px;height:10px;line-height:10px;font-size:7.2px;color:#31363b;font-weight:normal;white-space:nowrap;-webkit-text-stroke:0.12px #31363b;">12/8/2024 11:10 A. M.</div>
<div style="position:absolute;left:591.8px;transform-origin:0 0;transform:scaleX(0.85);top:169.79px;height:10px;line-height:10px;font-size:7.2px;color:#31363b;font-weight:normal;white-space:nowrap;-webkit-text-stroke:0.12px #31363b;">rwx</div>
<div style="position:absolute;left:375px;top:179.95px;width:238px;height:10.87px;background:#ffffff;"></div>
<svg style="position:absolute;left:377px;top:181.14999999999998px;" width="10" height="10" viewBox="0 0 10 10"><path d="M2.5 7 V1 H7.8 V5.8" fill="none" stroke="#232629" stroke-width="0.9"/><circle cx="1.7" cy="7.1" r="1.3" fill="#232629"/><circle cx="6.9" cy="6" r="1.3" fill="#232629"/></svg>
<div style="position:absolute;left:390px;transform-origin:0 0;transform:scaleX(0.85);top:180.66px;height:10px;line-height:10px;font-size:7.2px;color:#31363b;font-weight:normal;white-space:nowrap;-webkit-text-stroke:0.12px #31363b;">Music</div>
<div style="position:absolute;right:255.10000000000002px;transform-origin:100% 0;transform:scaleX(0.77);top:180.66px;height:10px;line-height:10px;font-size:7.2px;color:#31363b;font-weight:normal;white-space:nowrap;-webkit-text-stroke:0.12px #31363b;">&lt;DIR&gt;</div>
<div style="position:absolute;left:499.8px;transform-origin:0 0;transform:scaleX(0.85);top:180.66px;height:10px;line-height:10px;font-size:7.2px;color:#31363b;font-weight:normal;white-space:nowrap;-webkit-text-stroke:0.12px #31363b;">Folder</div>
<div style="position:absolute;left:526.5px;transform-origin:0 0;transform:scaleX(0.85);top:180.66px;height:10px;line-height:10px;font-size:7.2px;color:#31363b;font-weight:normal;white-space:nowrap;-webkit-text-stroke:0.12px #31363b;">16/8/2024 8:58 P. M.</div>
<div style="position:absolute;left:591.8px;transform-origin:0 0;transform:scaleX(0.85);top:180.66px;height:10px;line-height:10px;font-size:7.2px;color:#31363b;font-weight:normal;white-space:nowrap;-webkit-text-stroke:0.12px #31363b;">rwx</div>
<div style="position:absolute;left:375px;top:190.82px;width:238px;height:10.87px;background:#f7f7f7;"></div>
<svg style="position:absolute;left:377px;top:192.01999999999998px;" width="10" height="10" viewBox="0 0 10 10"><rect x="0.6" y="0.4" width="7.6" height="8" rx="0.6" fill="#5d6165"/><rect x="1.3" y="1.1" width="5.8" height="6.6" fill="#a3a7ab"/><rect x="0.6" y="0.4" width="7.6" height="2" rx="0.5" fill="#3c4045"/><path d="M1.3 4 H6.9 M1.3 5.8 H6.9" stroke="#6a6f73" stroke-width="0.5"/><path d="M7.6 1 V8" stroke="#5a5f63" stroke-width="0.8"/></svg>
<div style="position:absolute;left:390px;transform-origin:0 0;transform:scaleX(0.85);top:191.53px;height:10px;line-height:10px;font-size:7.2px;color:#31363b;font-weight:normal;white-space:nowrap;-webkit-text-stroke:0.12px #31363b;">Notebooks</div>
<div style="position:absolute;right:255.10000000000002px;transform-origin:100% 0;transform:scaleX(0.77);top:191.53px;height:10px;line-height:10px;font-size:7.2px;color:#31363b;font-weight:normal;white-space:nowrap;-webkit-text-stroke:0.12px #31363b;">&lt;DIR&gt;</div>
<div style="position:absolute;left:499.8px;transform-origin:0 0;transform:scaleX(0.85);top:191.53px;height:10px;line-height:10px;font-size:7.2px;color:#31363b;font-weight:normal;white-space:nowrap;-webkit-text-stroke:0.12px #31363b;">Folder</div>
<div style="position:absolute;left:526.5px;transform-origin:0 0;transform:scaleX(0.85);top:191.53px;height:10px;line-height:10px;font-size:7.2px;color:#31363b;font-weight:normal;white-space:nowrap;-webkit-text-stroke:0.12px #31363b;">14/8/2024 9:10 P. M.</div>
<div style="position:absolute;left:591.8px;transform-origin:0 0;transform:scaleX(0.85);top:191.53px;height:10px;line-height:10px;font-size:7.2px;color:#31363b;font-weight:normal;white-space:nowrap;-webkit-text-stroke:0.12px #31363b;">rwx</div>
<div style="position:absolute;left:375px;top:201.69px;width:238px;height:10.87px;background:#ffffff;"></div>
<svg style="position:absolute;left:377px;top:202.89px;" width="10" height="10" viewBox="0 0 10 10"><rect x="0.6" y="0.6" width="7.6" height="7.6" fill="#fff" stroke="#232629" stroke-width="0.95"/><path d="M1.1 1.1 L3.8 3.8" stroke="#232629" stroke-width="0.9"/><path d="M2.6 8.2 L5.7 5.2 L8.2 7.4 V8.2 Z" fill="#232629"/></svg>
<div style="position:absolute;left:390px;transform-origin:0 0;transform:scaleX(0.85);top:202.40px;height:10px;line-height:10px;font-size:7.2px;color:#31363b;font-weight:normal;white-space:nowrap;-webkit-text-stroke:0.12px #31363b;">Pictures</div>
<div style="position:absolute;right:255.10000000000002px;transform-origin:100% 0;transform:scaleX(0.77);top:202.40px;height:10px;line-height:10px;font-size:7.2px;color:#31363b;font-weight:normal;white-space:nowrap;-webkit-text-stroke:0.12px #31363b;">&lt;DIR&gt;</div>
<div style="position:absolute;left:499.8px;transform-origin:0 0;transform:scaleX(0.85);top:202.40px;height:10px;line-height:10px;font-size:7.2px;color:#31363b;font-weight:normal;white-space:nowrap;-webkit-text-stroke:0.12px #31363b;">Folder</div>
<div style="position:absolute;left:526.5px;transform-origin:0 0;transform:scaleX(0.85);top:202.40px;height:10px;line-height:10px;font-size:7.2px;color:#31363b;font-weight:normal;white-space:nowrap;-webkit-text-stroke:0.12px #31363b;">12/8/2024 10:31 P. M.</div>
<div style="position:absolute;left:591.8px;transform-origin:0 0;transform:scaleX(0.85);top:202.40px;height:10px;line-height:10px;font-size:7.2px;color:#31363b;font-weight:normal;white-space:nowrap;-webkit-text-stroke:0.12px #31363b;">rwx</div>
<div style="position:absolute;left:375px;top:212.56px;width:238px;height:10.87px;background:#f7f7f7;"></div>
<svg style="position:absolute;left:377px;top:213.76px;" width="10" height="10" viewBox="0 0 10 10"><rect x="0.6" y="0.6" width="7.6" height="7.6" fill="none" stroke="#232629" stroke-width="0.9"/><rect x="0.6" y="0.6" width="7.6" height="1.3" fill="#232629"/><path d="M1.8 3.6 H2.8 M3.6 3.6 H7 M1.8 5.6 H2.8 M3.6 5.6 H7" stroke="#232629" stroke-width="0.8"/></svg>
<div style="position:absolute;left:390px;transform-origin:0 0;transform:scaleX(0.85);top:213.27px;height:10px;line-height:10px;font-size:7.2px;color:#31363b;font-weight:normal;white-space:nowrap;-webkit-text-stroke:0.12px #31363b;">Projects</div>
<div style="position:absolute;right:255.10000000000002px;transform-origin:100% 0;transform:scaleX(0.77);top:213.27px;height:10px;line-height:10px;font-size:7.2px;color:#31363b;font-weight:normal;white-space:nowrap;-webkit-text-stroke:0.12px #31363b;">&lt;DIR&gt;</div>
<div style="position:absolute;left:499.8px;transform-origin:0 0;transform:scaleX(0.85);top:213.27px;height:10px;line-height:10px;font-size:7.2px;color:#31363b;font-weight:normal;white-space:nowrap;-webkit-text-stroke:0.12px #31363b;">Folder</div>
<div style="position:absolute;left:526.5px;transform-origin:0 0;transform:scaleX(0.85);top:213.27px;height:10px;line-height:10px;font-size:7.2px;color:#31363b;font-weight:normal;white-space:nowrap;-webkit-text-stroke:0.12px #31363b;">13/8/2024 3:32 P. M.</div>
<div style="position:absolute;left:591.8px;transform-origin:0 0;transform:scaleX(0.85);top:213.27px;height:10px;line-height:10px;font-size:7.2px;color:#31363b;font-weight:normal;white-space:nowrap;-webkit-text-stroke:0.12px #31363b;">rwx</div>
<div style="position:absolute;left:375px;top:223.43px;width:238px;height:10.87px;background:#ffffff;"></div>
<svg style="position:absolute;left:377px;top:224.63px;" width="10" height="10" viewBox="0 0 10 10"><circle cx="4.4" cy="4.4" r="3.7" fill="none" stroke="#232629" stroke-width="0.9"/><path d="M4.4 1.8 V4.6 H6.6" fill="none" stroke="#232629" stroke-width="0.9"/></svg>
<div style="position:absolute;left:390px;transform-origin:0 0;transform:scaleX(0.85);top:224.14px;height:10px;line-height:10px;font-size:7.2px;color:#31363b;font-weight:normal;white-space:nowrap;-webkit-text-stroke:0.12px #31363b;">Temp</div>
<div style="position:absolute;right:255.10000000000002px;transform-origin:100% 0;transform:scaleX(0.77);top:224.14px;height:10px;line-height:10px;font-size:7.2px;color:#31363b;font-weight:normal;white-space:nowrap;-webkit-text-stroke:0.12px #31363b;">&lt;DIR&gt;</div>
<div style="position:absolute;left:499.8px;transform-origin:0 0;transform:scaleX(0.85);top:224.14px;height:10px;line-height:10px;font-size:7.2px;color:#31363b;font-weight:normal;white-space:nowrap;-webkit-text-stroke:0.12px #31363b;">Folder</div>
<div style="position:absolute;left:526.5px;transform-origin:0 0;transform:scaleX(0.85);top:224.14px;height:10px;line-height:10px;font-size:7.2px;color:#31363b;font-weight:normal;white-space:nowrap;-webkit-text-stroke:0.12px #31363b;">11/8/2024 7:13 P. M.</div>
<div style="position:absolute;left:591.8px;transform-origin:0 0;transform:scaleX(0.85);top:224.14px;height:10px;line-height:10px;font-size:7.2px;color:#31363b;font-weight:normal;white-space:nowrap;-webkit-text-stroke:0.12px #31363b;">rwx</div>
<div style="position:absolute;left:375px;top:234.29999999999998px;width:238px;height:10.87px;background:#f7f7f7;"></div>
<svg style="position:absolute;left:377px;top:235.49999999999997px;" width="10" height="10" viewBox="0 0 10 10"><path d="M8 0.8 L0.8 8 H8.4" fill="none" stroke="#232629" stroke-width="0.9"/><path d="M8 1 V8" stroke="#232629" stroke-width="0.6" opacity="0.35"/></svg>
<div style="position:absolute;left:390px;transform-origin:0 0;transform:scaleX(0.85);top:235.01px;height:10px;line-height:10px;font-size:7.2px;color:#31363b;font-weight:normal;white-space:nowrap;-webkit-text-stroke:0.12px #31363b;">Templates</div>
<div style="position:absolute;right:255.10000000000002px;transform-origin:100% 0;transform:scaleX(0.77);top:235.01px;height:10px;line-height:10px;font-size:7.2px;color:#31363b;font-weight:normal;white-space:nowrap;-webkit-text-stroke:0.12px #31363b;">&lt;DIR&gt;</div>
<div style="position:absolute;left:499.8px;transform-origin:0 0;transform:scaleX(0.85);top:235.01px;height:10px;line-height:10px;font-size:7.2px;color:#31363b;font-weight:normal;white-space:nowrap;-webkit-text-stroke:0.12px #31363b;">Folder</div>
<div style="position:absolute;left:526.5px;transform-origin:0 0;transform:scaleX(0.85);top:235.01px;height:10px;line-height:10px;font-size:7.2px;color:#31363b;font-weight:normal;white-space:nowrap;-webkit-text-stroke:0.12px #31363b;">12/8/2024 10:30 P. M.</div>
<div style="position:absolute;left:591.8px;transform-origin:0 0;transform:scaleX(0.85);top:235.01px;height:10px;line-height:10px;font-size:7.2px;color:#31363b;font-weight:normal;white-space:nowrap;-webkit-text-stroke:0.12px #31363b;">rwx</div>
<div style="position:absolute;left:375px;top:245.17px;width:238px;height:10.87px;background:#ffffff;"></div>
<svg style="position:absolute;left:377px;top:246.36999999999998px;" width="10" height="10" viewBox="0 0 10 10"><rect x="0.8" y="0.6" width="7.2" height="7.6" fill="none" stroke="#232629" stroke-width="1.1"/><rect x="0.8" y="0.6" width="7.2" height="1.6" fill="#232629"/><rect x="0.8" y="6.6" width="7.2" height="1.6" fill="#232629"/><path d="M0.8 4.4 H8" stroke="#232629" stroke-width="0.9"/></svg>
<div style="position:absolute;left:390px;transform-origin:0 0;transform:scaleX(0.85);top:245.88px;height:10px;line-height:10px;font-size:7.2px;color:#31363b;font-weight:normal;white-space:nowrap;-webkit-text-stroke:0.12px #31363b;">Videos</div>
<div style="position:absolute;right:255.10000000000002px;transform-origin:100% 0;transform:scaleX(0.77);top:245.88px;height:10px;line-height:10px;font-size:7.2px;color:#31363b;font-weight:normal;white-space:nowrap;-webkit-text-stroke:0.12px #31363b;">&lt;DIR&gt;</div>
<div style="position:absolute;left:499.8px;transform-origin:0 0;transform:scaleX(0.85);top:245.88px;height:10px;line-height:10px;font-size:7.2px;color:#31363b;font-weight:normal;white-space:nowrap;-webkit-text-stroke:0.12px #31363b;">Folder</div>
<div style="position:absolute;left:526.5px;transform-origin:0 0;transform:scaleX(0.85);top:245.88px;height:10px;line-height:10px;font-size:7.2px;color:#31363b;font-weight:normal;white-space:nowrap;-webkit-text-stroke:0.12px #31363b;">12/8/2024 10:30 P. M.</div>
<div style="position:absolute;left:591.8px;transform-origin:0 0;transform:scaleX(0.85);top:245.88px;height:10px;line-height:10px;font-size:7.2px;color:#31363b;font-weight:normal;white-space:nowrap;-webkit-text-stroke:0.12px #31363b;">rwx</div>
<div style="position:absolute;left:375px;top:256.03999999999996px;width:238px;height:10.87px;background:#f7f7f7;"></div>
<svg style="position:absolute;left:377px;top:257.23999999999995px;" width="10" height="10" viewBox="0 0 10 10"><path d="M0.8 0.3 H4.9 M0.8 2.3 H8.8 M0.8 4.3 H4.9 M0.8 6.2 H8.8 M0.8 8.2 H6.8" stroke="#7d8792" stroke-width="0.85"/></svg>
<div style="position:absolute;left:390px;transform-origin:0 0;transform:scaleX(0.85);top:256.75px;height:10px;line-height:10px;font-size:7.2px;color:#31363b;font-weight:normal;white-space:nowrap;-webkit-text-stroke:0.12px #31363b;">.bash_history</div>
<div style="position:absolute;right:255.10000000000002px;transform-origin:100% 0;transform:scaleX(0.85);top:256.75px;height:10px;line-height:10px;font-size:7.2px;color:#31363b;font-weight:normal;white-space:nowrap;-webkit-text-stroke:0.12px #31363b;">18.0 KiB</div>
<div style="position:absolute;left:499.8px;transform-origin:0 0;transform:scaleX(0.85);top:256.75px;height:10px;line-height:10px;font-size:7.2px;color:#31363b;font-weight:normal;white-space:nowrap;-webkit-text-stroke:0.12px #31363b;">Plain t...</div>
<div style="position:absolute;left:526.5px;transform-origin:0 0;transform:scaleX(0.85);top:256.75px;height:10px;line-height:10px;font-size:7.2px;color:#31363b;font-weight:normal;white-space:nowrap;-webkit-text-stroke:0.12px #31363b;">17/8/2024 5:44 P. M.</div>
<div style="position:absolute;left:591.8px;transform-origin:0 0;transform:scaleX(0.85);top:256.75px;height:10px;line-height:10px;font-size:7.2px;color:#31363b;font-weight:normal;white-space:nowrap;-webkit-text-stroke:0.12px #31363b;">rw-</div>
<div style="position:absolute;left:375px;top:266.90999999999997px;width:238px;height:10.87px;background:#ffffff;"></div>
<svg style="position:absolute;left:377px;top:268.10999999999996px;" width="10" height="10" viewBox="0 0 10 10"><path d="M0.8 0.3 H4.9 M0.8 2.3 H8.8 M0.8 4.3 H4.9 M0.8 6.2 H8.8 M0.8 8.2 H6.8" stroke="#7d8792" stroke-width="0.85"/></svg>
<div style="position:absolute;left:390px;transform-origin:0 0;transform:scaleX(0.85);top:267.62px;height:10px;line-height:10px;font-size:7.2px;color:#31363b;font-weight:normal;white-space:nowrap;-webkit-text-stroke:0.12px #31363b;">.bash_logout</div>
<div style="position:absolute;right:255.10000000000002px;transform-origin:100% 0;transform:scaleX(0.85);top:267.62px;height:10px;line-height:10px;font-size:7.2px;color:#31363b;font-weight:normal;white-space:nowrap;-webkit-text-stroke:0.12px #31363b;">21 B</div>
<div style="position:absolute;left:499.8px;transform-origin:0 0;transform:scaleX(0.85);top:267.62px;height:10px;line-height:10px;font-size:7.2px;color:#31363b;font-weight:normal;white-space:nowrap;-webkit-text-stroke:0.12px #31363b;">Plain t...</div>
<div style="position:absolute;left:526.5px;transform-origin:0 0;transform:scaleX(0.85);top:267.62px;height:10px;line-height:10px;font-size:7.2px;color:#31363b;font-weight:normal;white-space:nowrap;-webkit-text-stroke:0.12px #31363b;">4/7/2024 5:21 P. M.</div>
<div style="position:absolute;left:591.8px;transform-origin:0 0;transform:scaleX(0.85);top:267.62px;height:10px;line-height:10px;font-size:7.2px;color:#31363b;font-weight:normal;white-space:nowrap;-webkit-text-stroke:0.12px #31363b;">rw-</div>
<div style="position:absolute;left:375px;top:277.78px;width:238px;height:10.87px;background:#f7f7f7;"></div>
<svg style="position:absolute;left:377px;top:278.97999999999996px;" width="10" height="10" viewBox="0 0 10 10"><path d="M0.8 0.3 H4.9 M0.8 2.3 H8.8 M0.8 4.3 H4.9 M0.8 6.2 H8.8 M0.8 8.2 H6.8" stroke="#7d8792" stroke-width="0.85"/></svg>
<div style="position:absolute;left:390px;transform-origin:0 0;transform:scaleX(0.85);top:278.49px;height:10px;line-height:10px;font-size:7.2px;color:#31363b;font-weight:normal;white-space:nowrap;-webkit-text-stroke:0.12px #31363b;">.bash_profile</div>
<div style="position:absolute;right:255.10000000000002px;transform-origin:100% 0;transform:scaleX(0.85);top:278.49px;height:10px;line-height:10px;font-size:7.2px;color:#31363b;font-weight:normal;white-space:nowrap;-webkit-text-stroke:0.12px #31363b;">57 B</div>
<div style="position:absolute;left:499.8px;transform-origin:0 0;transform:scaleX(0.85);top:278.49px;height:10px;line-height:10px;font-size:7.2px;color:#31363b;font-weight:normal;white-space:nowrap;-webkit-text-stroke:0.12px #31363b;">Plain t...</div>
<div style="position:absolute;left:526.5px;transform-origin:0 0;transform:scaleX(0.85);top:278.49px;height:10px;line-height:10px;font-size:7.2px;color:#31363b;font-weight:normal;white-space:nowrap;-webkit-text-stroke:0.12px #31363b;">4/7/2024 5:21 P. M.</div>
<div style="position:absolute;left:591.8px;transform-origin:0 0;transform:scaleX(0.85);top:278.49px;height:10px;line-height:10px;font-size:7.2px;color:#31363b;font-weight:normal;white-space:nowrap;-webkit-text-stroke:0.12px #31363b;">rw-</div>
<div style="position:absolute;left:375px;top:288.65px;width:238px;height:10.87px;background:#ffffff;"></div>
<svg style="position:absolute;left:377px;top:289.84999999999997px;" width="10" height="10" viewBox="0 0 10 10"><path d="M0.8 0.3 H4.9 M0.8 2.3 H8.8 M0.8 4.3 H4.9 M0.8 6.2 H8.8 M0.8 8.2 H6.8" stroke="#7d8792" stroke-width="0.85"/></svg>
<div style="position:absolute;left:390px;transform-origin:0 0;transform:scaleX(0.85);top:289.36px;height:10px;line-height:10px;font-size:7.2px;color:#31363b;font-weight:normal;white-space:nowrap;-webkit-text-stroke:0.12px #31363b;">.bashrc</div>
<div style="position:absolute;right:255.10000000000002px;transform-origin:100% 0;transform:scaleX(0.85);top:289.36px;height:10px;line-height:10px;font-size:7.2px;color:#31363b;font-weight:normal;white-space:nowrap;-webkit-text-stroke:0.12px #31363b;">3.2 KiB</div>
<div style="position:absolute;left:499.8px;transform-origin:0 0;transform:scaleX(0.85);top:289.36px;height:10px;line-height:10px;font-size:7.2px;color:#31363b;font-weight:normal;white-space:nowrap;-webkit-text-stroke:0.12px #31363b;">Plain t...</div>
<div style="position:absolute;left:526.5px;transform-origin:0 0;transform:scaleX(0.85);top:289.36px;height:10px;line-height:10px;font-size:7.2px;color:#31363b;font-weight:normal;white-space:nowrap;-webkit-text-stroke:0.12px #31363b;">4/7/2024 5:21 P. M.</div>
<div style="position:absolute;left:591.8px;transform-origin:0 0;transform:scaleX(0.85);top:289.36px;height:10px;line-height:10px;font-size:7.2px;color:#31363b;font-weight:normal;white-space:nowrap;-webkit-text-stroke:0.12px #31363b;">rw-</div>
<div style="position:absolute;left:375px;top:299.52px;width:238px;height:10.87px;background:#f7f7f7;"></div>
<svg style="position:absolute;left:377px;top:300.71999999999997px;" width="10" height="10" viewBox="0 0 10 10"><path d="M0.8 0.3 H4.9 M0.8 2.3 H8.8 M0.8 4.3 H4.9 M0.8 6.2 H8.8 M0.8 8.2 H6.8" stroke="#7d8792" stroke-width="0.85"/></svg>
<div style="position:absolute;left:390px;transform-origin:0 0;transform:scaleX(0.85);top:300.23px;height:10px;line-height:10px;font-size:7.2px;color:#31363b;font-weight:normal;white-space:nowrap;-webkit-text-stroke:0.12px #31363b;">.dir_colors</div>
<div style="position:absolute;right:255.10000000000002px;transform-origin:100% 0;transform:scaleX(0.85);top:300.23px;height:10px;line-height:10px;font-size:7.2px;color:#31363b;font-weight:normal;white-space:nowrap;-webkit-text-stroke:0.12px #31363b;">4.7 KiB</div>
<div style="position:absolute;left:499.8px;transform-origin:0 0;transform:scaleX(0.85);top:300.23px;height:10px;line-height:10px;font-size:7.2px;color:#31363b;font-weight:normal;white-space:nowrap;-webkit-text-stroke:0.12px #31363b;">Plain t...</div>
<div style="position:absolute;left:526.5px;transform-origin:0 0;transform:scaleX(0.85);top:300.23px;height:10px;line-height:10px;font-size:7.2px;color:#31363b;font-weight:normal;white-space:nowrap;-webkit-text-stroke:0.12px #31363b;">30/6/2024 2:51 A. M.</div>
<div style="position:absolute;left:591.8px;transform-origin:0 0;transform:scaleX(0.85);top:300.23px;height:10px;line-height:10px;font-size:7.2px;color:#31363b;font-weight:normal;white-space:nowrap;-webkit-text-stroke:0.12px #31363b;">rw-</div>
<div style="position:absolute;left:375px;top:310.39px;width:238px;height:10.87px;background:#ffffff;"></div>
<svg style="position:absolute;left:377px;top:311.59px;" width="10" height="10" viewBox="0 0 10 10"><path d="M0.8 0.3 H4.9 M0.8 2.3 H8.8 M0.8 4.3 H4.9 M0.8 6.2 H8.8 M0.8 8.2 H6.8" stroke="#7d8792" stroke-width="0.85"/></svg>
<div style="position:absolute;left:390px;transform-origin:0 0;transform:scaleX(0.85);top:311.10px;height:10px;line-height:10px;font-size:7.2px;color:#31363b;font-weight:normal;white-space:nowrap;-webkit-text-stroke:0.12px #31363b;">.gitconfig</div>
<div style="position:absolute;right:255.10000000000002px;transform-origin:100% 0;transform:scaleX(0.85);top:311.10px;height:10px;line-height:10px;font-size:7.2px;color:#31363b;font-weight:normal;white-space:nowrap;-webkit-text-stroke:0.12px #31363b;">204 B</div>
<div style="position:absolute;left:499.8px;transform-origin:0 0;transform:scaleX(0.85);top:311.10px;height:10px;line-height:10px;font-size:7.2px;color:#31363b;font-weight:normal;white-space:nowrap;-webkit-text-stroke:0.12px #31363b;">Plain t...</div>
<div style="position:absolute;left:526.5px;transform-origin:0 0;transform:scaleX(0.85);top:311.10px;height:10px;line-height:10px;font-size:7.2px;color:#31363b;font-weight:normal;white-space:nowrap;-webkit-text-stroke:0.12px #31363b;">12/8/2024 9:19 A. M.</div>
<div style="position:absolute;left:591.8px;transform-origin:0 0;transform:scaleX(0.85);top:311.10px;height:10px;line-height:10px;font-size:7.2px;color:#31363b;font-weight:normal;white-space:nowrap;-webkit-text-stroke:0.12px #31363b;">rw-</div>
<div style="position:absolute;left:375px;top:321.26px;width:238px;height:2.5400000000000205px;background:#f7f7f7;overflow:hidden;"></div>
<div style="position:absolute;left:377.8px;top:322.56px;width:4.1px;height:0.8px;background:#aab1b8;"></div>
<div style="position:absolute;left:127px;top:324.2px;width:246px;height:17.7px;background:#3daee9;"></div>
<div style="position:absolute;left:129px;transform-origin:0 0;transform:scaleX(0.85);top:328.91px;height:10px;line-height:10px;font-size:7.2px;color:#fcfcfc;font-weight:normal;white-space:nowrap;-webkit-text-stroke:0.12px #fcfcfc;">0 out of 3, 0 B out of 33 B</div>
<svg style="position:absolute;left:361.5px;top:330.5px;" width="8" height="5" viewBox="0 0 8 5"><path d="M1 4 L4 1.2 L7 4" fill="none" stroke="#232629" stroke-width="0.9"/></svg>
<div style="position:absolute;left:375.4px;top:323.8px;width:248.6px;height:19px;background:#fff;box-sizing:border-box;border-top:1px solid #c4c6c8;border-bottom:1px solid #c4c6c8;"></div>
<div style="position:absolute;left:377.3px;transform-origin:0 0;transform:scaleX(0.85);top:328.91px;height:10px;line-height:10px;font-size:7.2px;color:#232629;font-weight:normal;white-space:nowrap;-webkit-text-stroke:0.12px #232629;">0 out of 40, 0 B out of 298.8 MiB</div>
<svg style="position:absolute;left:611px;top:331px;" width="8" height="5" viewBox="0 0 8 5"><path d="M1 4 L4 1.2 L7 4" fill="none" stroke="#232629" stroke-width="0.9"/></svg>
<div style="position:absolute;left:127px;top:342px;width:246.5px;height:1.5px;background:#d6d2cf;"></div>
<div style="position:absolute;left:127.5px;top:343.5px;width:233px;height:12.5px;background:#eeeff0;border-top:0.8px solid #fbfbfb;box-sizing:border-box;"></div>
<div style="position:absolute;left:127.5px;top:356px;width:233px;height:2px;background:#3daee9;border-radius:0 0 0 1px;"></div>
<div style="position:absolute;left:143.3px;width:200px;text-align:center;transform-origin:50% 0;transform:scaleX(0.85);top:345.91px;height:10px;line-height:10px;font-size:7.2px;color:#232629;font-weight:normal;white-space:nowrap;-webkit-text-stroke:0.12px #232629;">Books</div>
<div style="position:absolute;left:360.5px;top:342.8px;width:13px;height:15.2px;background:#f6f7f7;box-sizing:border-box;border:1px solid #d5d7d9;border-top:none;"></div>
<svg style="position:absolute;left:363.5px;top:347px;" width="8" height="8" viewBox="0 0 8 8"><path d="M4.6 0.6 H0.7 V6.8 H4" fill="none" stroke="#232629" stroke-width="0.9"/><path d="M3 0.6 H5 L6.4 2 V4" fill="none" stroke="#232629" stroke-width="0.9"/><path d="M4.8 5.9 H7.6 M6.2 4.5 V7.3" stroke="#232629" stroke-width="0.8"/></svg>
<div style="position:absolute;left:375px;top:343.5px;width:235px;height:12.5px;background:#eeeff0;"></div>
<div style="position:absolute;left:375px;top:356px;width:235px;height:2px;background:#3daee9;"></div>
<div style="position:absolute;left:392.5px;width:200px;text-align:center;transform-origin:50% 0;transform:scaleX(0.85);top:345.91px;height:10px;line-height:10px;font-size:7.2px;color:#232629;font-weight:normal;white-space:nowrap;-webkit-text-stroke:0.12px #232629;">hunter</div>
<div style="position:absolute;left:609.8px;top:342.8px;width:13.7px;height:15.2px;background:#f6f7f7;box-sizing:border-box;border:1px solid #d5d7d9;border-top:none;"></div>
<svg style="position:absolute;left:613px;top:347px;" width="8" height="8" viewBox="0 0 8 8"><path d="M4.6 0.6 H0.7 V6.8 H4" fill="none" stroke="#232629" stroke-width="0.9"/><path d="M3 0.6 H5 L6.4 2 V4" fill="none" stroke="#232629" stroke-width="0.9"/><path d="M4.8 5.9 H7.6 M6.2 4.5 V7.3" stroke="#232629" stroke-width="0.8"/></svg>
<div style="position:absolute;left:127.5px;top:358.8px;width:53.6px;height:15.7px;background:#fbfbfb;box-sizing:border-box;border-bottom:1.5px solid #c3c5c7;border-left:0.6px solid #e6e7e8;border-radius:1px;"></div>
<div style="position:absolute;left:181.1px;top:359.2px;width:1.6px;height:14.4px;background:#d6d7d8;"></div>
<div style="position:absolute;left:54.400000000000006px;width:200px;text-align:center;transform-origin:50% 0;transform:scaleX(0.85);top:361.51px;height:10px;line-height:10px;font-size:7.2px;color:#232629;font-weight:normal;white-space:nowrap;-webkit-text-stroke:0.12px #232629;">F2 Rename</div>
<div style="position:absolute;left:182.7px;top:358.8px;width:53.6px;height:15.7px;background:#fbfbfb;box-sizing:border-box;border-bottom:1.5px solid #c3c5c7;border-left:0.6px solid #e6e7e8;border-radius:1px;"></div>
<div style="position:absolute;left:236.29999999999998px;top:359.2px;width:1.6px;height:14.4px;background:#d6d7d8;"></div>
<div style="position:absolute;left:109.6px;width:200px;text-align:center;transform-origin:50% 0;transform:scaleX(0.85);top:361.51px;height:10px;line-height:10px;font-size:7.2px;color:#232629;font-weight:normal;white-space:nowrap;-webkit-text-stroke:0.12px #232629;">F3 View</div>
<div style="position:absolute;left:237.9px;top:358.8px;width:53.6px;height:15.7px;background:#fbfbfb;box-sizing:border-box;border-bottom:1.5px solid #c3c5c7;border-left:0.6px solid #e6e7e8;border-radius:1px;"></div>
<div style="position:absolute;left:291.5px;top:359.2px;width:1.6px;height:14.4px;background:#d6d7d8;"></div>
<div style="position:absolute;left:164.8px;width:200px;text-align:center;transform-origin:50% 0;transform:scaleX(0.85);top:361.51px;height:10px;line-height:10px;font-size:7.2px;color:#232629;font-weight:normal;white-space:nowrap;-webkit-text-stroke:0.12px #232629;">F4 Edit</div>
<div style="position:absolute;left:293.1px;top:358.8px;width:53.6px;height:15.7px;background:#fbfbfb;box-sizing:border-box;border-bottom:1.5px solid #c3c5c7;border-left:0.6px solid #e6e7e8;border-radius:1px;"></div>
<div style="position:absolute;left:346.70000000000005px;top:359.2px;width:1.6px;height:14.4px;background:#d6d7d8;"></div>
<div style="position:absolute;left:220.0px;width:200px;text-align:center;transform-origin:50% 0;transform:scaleX(0.85);top:361.51px;height:10px;line-height:10px;font-size:7.2px;color:#232629;font-weight:normal;white-space:nowrap;-webkit-text-stroke:0.12px #232629;">F5 Copy</div>
<div style="position:absolute;left:348.3px;top:358.8px;width:53.6px;height:15.7px;background:#fbfbfb;box-sizing:border-box;border-bottom:1.5px solid #c3c5c7;border-left:0.6px solid #e6e7e8;border-radius:1px;"></div>
<div style="position:absolute;left:401.90000000000003px;top:359.2px;width:1.6px;height:14.4px;background:#d6d7d8;"></div>
<div style="position:absolute;left:275.2px;width:200px;text-align:center;transform-origin:50% 0;transform:scaleX(0.85);top:361.51px;height:10px;line-height:10px;font-size:7.2px;color:#232629;font-weight:normal;white-space:nowrap;-webkit-text-stroke:0.12px #232629;">F6 Move</div>
<div style="position:absolute;left:403.5px;top:358.8px;width:53.6px;height:15.7px;background:#fbfbfb;box-sizing:border-box;border-bottom:1.5px solid #c3c5c7;border-left:0.6px solid #e6e7e8;border-radius:1px;"></div>
<div style="position:absolute;left:457.1px;top:359.2px;width:1.6px;height:14.4px;background:#d6d7d8;"></div>
<div style="position:absolute;left:330.4px;width:200px;text-align:center;transform-origin:50% 0;transform:scaleX(0.85);top:361.51px;height:10px;line-height:10px;font-size:7.2px;color:#232629;font-weight:normal;white-space:nowrap;-webkit-text-stroke:0.12px #232629;">F7 Mkdir</div>
<div style="position:absolute;left:458.70000000000005px;top:358.8px;width:53.6px;height:15.7px;background:#fbfbfb;box-sizing:border-box;border-bottom:1.5px solid #c3c5c7;border-left:0.6px solid #e6e7e8;border-radius:1px;"></div>
<div style="position:absolute;left:512.3000000000001px;top:359.2px;width:1.6px;height:14.4px;background:#d6d7d8;"></div>
<div style="position:absolute;left:385.6px;width:200px;text-align:center;transform-origin:50% 0;transform:scaleX(0.85);top:361.51px;height:10px;line-height:10px;font-size:7.2px;color:#232629;font-weight:normal;white-space:nowrap;-webkit-text-stroke:0.12px #232629;">F8 Delete</div>
<div style="position:absolute;left:513.9000000000001px;top:358.8px;width:53.6px;height:15.7px;background:#fbfbfb;box-sizing:border-box;border-bottom:1.5px solid #c3c5c7;border-left:0.6px solid #e6e7e8;border-radius:1px;"></div>
<div style="position:absolute;left:567.5000000000001px;top:359.2px;width:1.6px;height:14.4px;background:#d6d7d8;"></div>
<div style="position:absolute;left:440.80000000000007px;width:200px;text-align:center;transform-origin:50% 0;transform:scaleX(0.85);top:361.51px;height:10px;line-height:10px;font-size:7.2px;color:#232629;font-weight:normal;white-space:nowrap;-webkit-text-stroke:0.12px #232629;">F9 Term</div>
<div style="position:absolute;left:569.1px;top:358.8px;width:53.6px;height:15.7px;background:#fbfbfb;box-sizing:border-box;border-bottom:1.5px solid #c3c5c7;border-left:0.6px solid #e6e7e8;border-radius:1px;"></div>
<div style="position:absolute;left:496.0px;width:200px;text-align:center;transform-origin:50% 0;transform:scaleX(0.85);top:361.51px;height:10px;line-height:10px;font-size:7.2px;color:#232629;font-weight:normal;white-space:nowrap;-webkit-text-stroke:0.12px #232629;">F10 Quit</div>
<div style="position:absolute;left:129.6px;transform-origin:0 0;transform:scaleX(0.85);top:375.31px;height:10px;line-height:10px;font-size:7.2px;color:#232629;font-weight:normal;white-space:nowrap;-webkit-text-stroke:0.12px #232629;white-space:pre;">Pictures/  Folder</div>
</body></html>
